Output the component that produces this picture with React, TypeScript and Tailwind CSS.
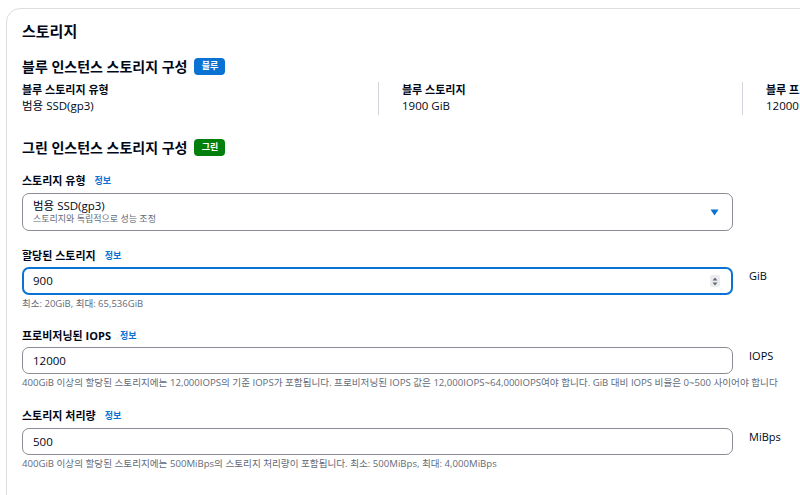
import React from "react"

const font = "font-['Open_Sans','Noto_Sans_CJK_KR',sans-serif]"

function Badge({ label, tone }: { label: string; tone: "blue" | "green" }) {
  return (
    <span
      className={
        "ml-[7px] inline-flex h-[17px] w-[31px] items-center justify-center rounded-[4px] text-[9px] font-bold text-white " +
        (tone === "blue" ? "bg-[#0972d3]" : "bg-[#037f0c]")
      }
    >
      {label}
    </span>
  )
}

function Label({ text, className }: { text: string; className?: string }) {
  return (
    <div className={"flex h-[16px] items-center text-[11px] font-bold leading-[16px] text-[#000716] " + (className ?? "")}>
      {text}
      <span className="ml-[9px] text-[9px] font-bold text-[#0972d3]">정보</span>
    </div>
  )
}

function Spinner() {
  return (
    <div className="flex h-[12px] w-[10px] items-center justify-center rounded-[2px] bg-[#ececef]">
      <svg width="6" height="9" viewBox="0 0 6 9">
        <path d="M3 0.5L5.5 3.5H0.5Z" fill="#5f6b7a" />
        <path d="M3 8.5L5.5 5.5H0.5Z" fill="#5f6b7a" />
      </svg>
    </div>
  )
}

function NumberField({
  value,
  unit,
  focused,
  className,
  height,
}: {
  value: string
  unit: string
  focused?: boolean
  className?: string
  height: string
}) {
  return (
    <div className={"flex items-start " + (className ?? "")}>
      <div
        className={
          "flex w-[711px] items-center justify-between rounded-[7px] text-[11.5px] text-[#000716] " +
          height +
          " " +
          (focused ? "border-2 border-[#0972d3] pl-[9px] pr-[11px]" : "border border-[#8c8c94] pl-[10px] pr-[12px]")
        }
      >
        <span>{value}</span>
        {focused && <Spinner />}
      </div>
      <span className="ml-[16px] mt-[1px] text-[11px] leading-[16px] text-[#000716]">{unit}</span>
    </div>
  )
}

export default function App() {
  return (
    <div className={"h-[495px] w-[800px] overflow-hidden bg-white " + font}>
      <div className="ml-[6px] mt-[8px] min-h-[520px] w-[830px] rounded-[14px] border border-[#dcdde1] pl-[15px] pt-[12px]">
        <h2 className="text-[15px] font-bold leading-[20px] text-[#000716]">스토리지</h2>

        <div className="mt-[15px] flex h-[20px] items-center text-[14px] font-bold text-[#000716]">
          블루 인스턴스 스토리지 구성
          <Badge label="블루" tone="blue" />
        </div>

        <div className="mt-[6px] flex text-[11px] leading-[16px] text-[#000716]">
          <div className="h-[33px] w-[356px] shrink-0">
            <div className="font-bold">블루 스토리지 유형</div>
            <div className="text-[11.5px]">범용 SSD(gp3)</div>
          </div>
          <div className="h-[33px] w-[364px] shrink-0 border-l border-[#d1d5db] pl-[23px]">
            <div className="font-bold">블루 스토리지</div>
            <div className="text-[11.5px]">1900 GiB</div>
          </div>
          <div className="h-[33px] w-[200px] shrink-0 border-l border-[#d1d5db] pl-[23px]">
            <div className="font-bold">블루 프로비저닝된 IOPS</div>
            <div className="text-[11.5px]">12000</div>
          </div>
        </div>

        <div className="mt-[22px] flex h-[20px] items-center text-[14px] font-bold text-[#000716]">
          그린 인스턴스 스토리지 구성
          <Badge label="그린" tone="green" />
        </div>

        <Label text="스토리지 유형" className="mt-[16px]" />
        <div className="mt-[4px] flex h-[38px] w-[711px] items-center justify-between rounded-[7px] border border-[#8c8c94] pl-[10px] pr-[13px]">
          <div>
            <div className="text-[11.5px] leading-[14px] text-[#000716]">범용 SSD(gp3)</div>
            <div className="text-[9px] leading-[12px] text-[#5f6b7a]">스토리지와 독립적으로 성능 조정</div>
          </div>
          <svg width="9" height="7" viewBox="0 0 9 7">
            <path d="M0.5 0.5H8.5L4.5 6.5Z" fill="#0972d3" />
          </svg>
        </div>

        <Label text="할당된 스토리지" className="mt-[17px]" />
        <NumberField value="900" unit="GiB" focused className="mt-[3px]" height="h-[28px]" />
        <div className="mt-[2px] text-[9.5px] leading-[14px] text-[#5f6b7a]">최소: 20GiB, 최대: 65,536GiB</div>

        <Label text="프로비저닝된 IOPS" className="mt-[17px]" />
        <NumberField value="12000" unit="IOPS" className="mt-[3px]" height="h-[27px]" />
        <div className="mt-[2px] whitespace-nowrap text-[9.6px] leading-[14px] text-[#5f6b7a]">
          400GiB 이상의 할당된 스토리지에는 12,000IOPS의 기준 IOPS가 포함됩니다. 프로비저닝된 IOPS 값은
          12,000IOPS~64,000IOPS여야 합니다. GiB 대비 IOPS 비율은 0~500 사이어야 합니다
        </div>

        <Label text="스토리지 처리량" className="mt-[18px]" />
        <NumberField value="500" unit="MiBps" className="mt-[4px]" height="h-[27px]" />
        <div className="mt-[2px] text-[9.6px] leading-[14px] text-[#5f6b7a]">
          400GiB 이상의 할당된 스토리지에는 500MiBps의 스토리지 처리량이 포함됩니다. 최소: 500MiBps, 최대: 4,000MiBps
        </div>
      </div>
    </div>
  )
}
